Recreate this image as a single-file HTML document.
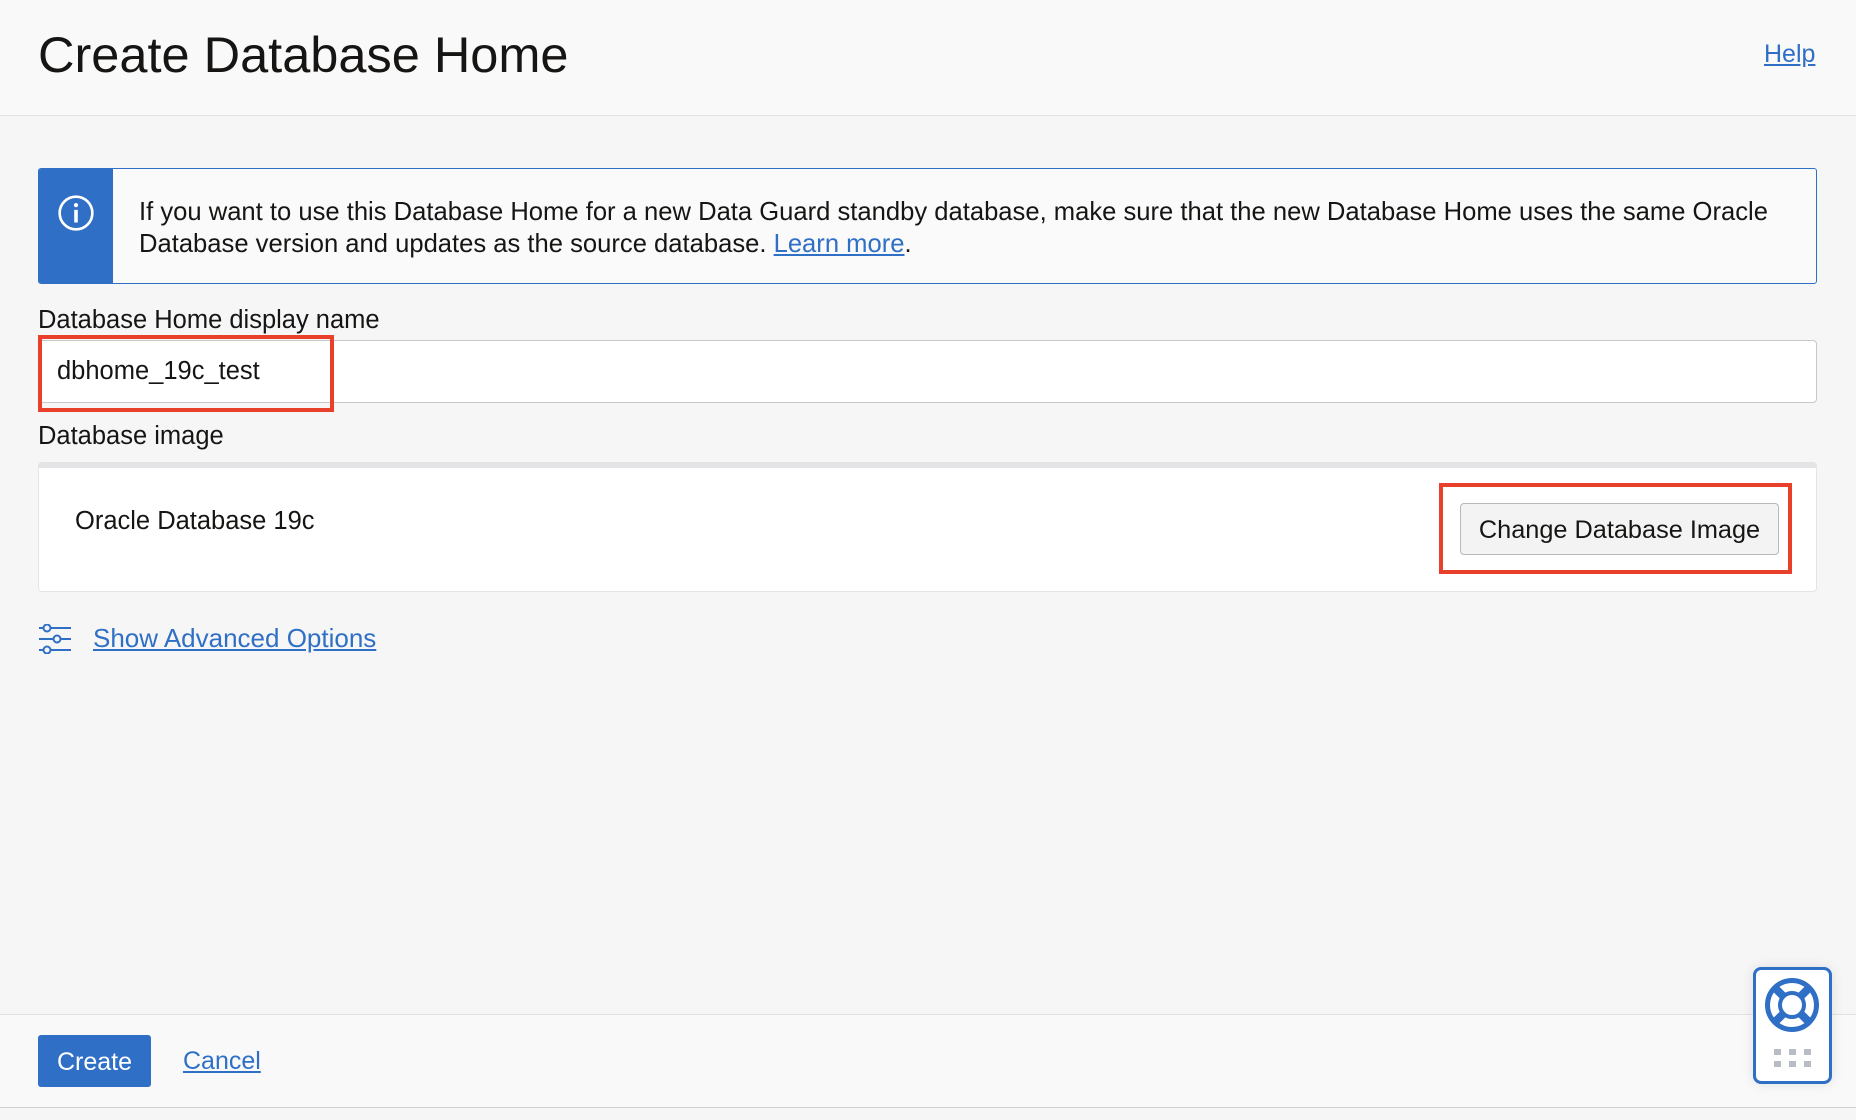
<!DOCTYPE html>
<html><head><meta charset="utf-8"><style>
*{box-sizing:border-box;margin:0;padding:0}
body{width:1856px;height:1120px;background:#f6f6f6;font-family:"Liberation Sans",Arial,sans-serif;color:#161513;position:relative;overflow:hidden}
.a{position:absolute}
a{color:#2f6fc6;text-decoration:underline}
</style></head><body>
<div class="a" style="left:0;top:0;width:1856px;height:116px;background:#f9f9f9;border-bottom:1px solid #e2e2e2"></div>
<div class="a" style="left:38px;top:25px;font-size:50.5px;">Create Database Home</div>
<a class="a" style="left:1764px;top:40px;font-size:25px">Help</a>

<div class="a" style="left:38px;top:168px;width:1779px;height:116px;border:1.5px solid #2f6fc6;border-radius:3px;background:#fafafa;overflow:hidden">
 <div class="a" style="left:0;top:0;width:74px;height:116px;background:#2f6fc6"></div>
 <svg class="a" style="left:18px;top:25px" width="38" height="38" viewBox="0 0 36 36"><circle cx="18" cy="18" r="15.5" fill="none" stroke="#fff" stroke-width="2.5"/><circle cx="18" cy="10.5" r="2" fill="#fff"/><rect x="16.3" y="15" width="3.4" height="12" fill="#fff"/></svg>
 <div class="a" style="left:100px;top:27px;font-size:25.6px;line-height:32px;width:1670px">If you want to use this Database Home for a new Data Guard standby database, make sure that the new Database Home uses the same Oracle Database version and updates as the source database. <a>Learn more</a>.</div>
</div>

<div class="a" style="left:38px;top:306px;font-size:25.5px">Database Home display name</div>
<div class="a" style="left:38px;top:340px;width:1779px;height:63px;background:#fff;border:1px solid #c8c8c8;border-radius:4px"></div>
<div class="a" style="left:57px;top:357px;font-size:25.5px">dbhome_19c_test</div>
<div class="a" style="left:38px;top:335px;width:296px;height:77px;border:4px solid #e8402a"></div>

<div class="a" style="left:38px;top:422px;font-size:25.5px">Database image</div>
<div class="a" style="left:38px;top:462px;width:1779px;height:130px;background:#fff;border:1px solid #e4e4e4;border-top:6px solid #e4e4e6;border-radius:4px"></div>
<div class="a" style="left:75px;top:507px;font-size:25.5px">Oracle Database 19c</div>
<div class="a" style="left:1460px;top:503px;width:319px;height:52px;background:#f3f3f3;border:1px solid #b8b8b8;border-radius:4px;font-size:25.3px;text-align:center;line-height:52px">Change Database Image</div>
<div class="a" style="left:1439px;top:483px;width:353px;height:91px;border:4px solid #e8402a"></div>

<svg class="a" style="left:39px;top:624px" width="32" height="30" viewBox="0 0 32 30" fill="none" stroke="#2f6fc6" stroke-width="2"><line x1="0" y1="4" x2="4" y2="4"/><circle cx="8" cy="4" r="3.5"/><line x1="12" y1="4" x2="32" y2="4"/><line x1="0" y1="15" x2="14" y2="15"/><circle cx="18" cy="15" r="3.5"/><line x1="22" y1="15" x2="32" y2="15"/><line x1="0" y1="26" x2="4" y2="26"/><circle cx="8" cy="26" r="3.5"/><line x1="12" y1="26" x2="32" y2="26"/></svg>
<a class="a" style="left:93px;top:623px;font-size:26px">Show Advanced Options</a>

<div class="a" style="left:0;top:1014px;width:1856px;height:94px;background:#f9f9f9;border-top:1px solid #e2e2e2;border-bottom:1px solid #cfcfcf"></div>
<div class="a" style="left:38px;top:1035px;width:113px;height:52px;background:#2f6fc6;border-radius:3px;color:#fff;font-size:25px;text-align:center;line-height:54px">Create</div>
<a class="a" style="left:183px;top:1047px;font-size:25px">Cancel</a>

<div class="a" style="left:1753px;top:967px;width:79px;height:117px;background:#fff;border:3px solid #2f6fc6;border-radius:8px;box-shadow:0 0 12px rgba(0,0,0,.1)"></div>
<svg class="a" style="left:1764px;top:977px" width="56" height="56" viewBox="0 0 56 56"><circle cx="28" cy="28" r="24.5" fill="none" stroke="#2f6fc6" stroke-width="5"/><circle cx="28" cy="28" r="12" fill="none" stroke="#2f6fc6" stroke-width="4"/><g stroke="#2f6fc6" stroke-width="8"><line x1="10" y1="10" x2="19" y2="19"/><line x1="46" y1="10" x2="37" y2="19"/><line x1="10" y1="46" x2="19" y2="37"/><line x1="46" y1="46" x2="37" y2="37"/></g></svg>
<svg class="a" style="left:1774px;top:1049px" width="38" height="24"><g fill="#b8bcc4"><rect x="0" y="0" width="7" height="6"/><rect x="15" y="0" width="7" height="6"/><rect x="30" y="0" width="7" height="6"/><rect x="0" y="12" width="7" height="6"/><rect x="15" y="12" width="7" height="6"/><rect x="30" y="12" width="7" height="6"/></g></svg>
</body></html>
